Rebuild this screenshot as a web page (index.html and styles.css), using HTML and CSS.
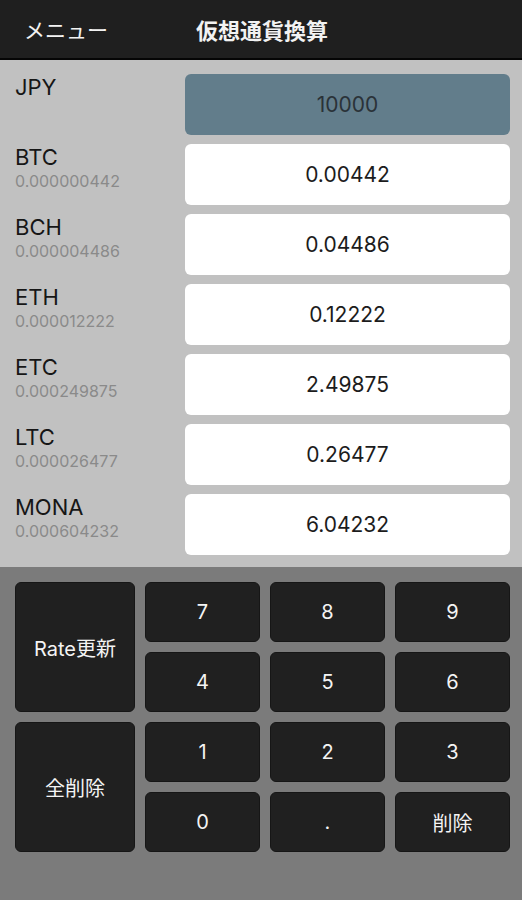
FILE: index.html
```html
<!DOCTYPE html>
<html lang="ja">
<head>
    <meta charset="UTF-8">
    <title>仮想通貨換算</title>
    <link rel="stylesheet" href="styles.css">
</head>
<body>
    <header class="topbar">
        <span class="menu">メニュー</span>
        <span class="title">仮想通貨換算</span>
    </header>

    <section class="rates">
        <div class="row">
            <div class="label"><div class="code">JPY</div></div>
            <div class="value active">10000</div>
        </div>
        <div class="row">
            <div class="label"><div class="code">BTC</div><div class="rate">0.000000442</div></div>
            <div class="value">0.00442</div>
        </div>
        <div class="row">
            <div class="label"><div class="code">BCH</div><div class="rate">0.000004486</div></div>
            <div class="value">0.04486</div>
        </div>
        <div class="row">
            <div class="label"><div class="code">ETH</div><div class="rate">0.000012222</div></div>
            <div class="value">0.12222</div>
        </div>
        <div class="row">
            <div class="label"><div class="code">ETC</div><div class="rate">0.000249875</div></div>
            <div class="value">2.49875</div>
        </div>
        <div class="row">
            <div class="label"><div class="code">LTC</div><div class="rate">0.000026477</div></div>
            <div class="value">0.26477</div>
        </div>
        <div class="row">
            <div class="label"><div class="code">MONA</div><div class="rate">0.000604232</div></div>
            <div class="value">6.04232</div>
        </div>
    </section>

    <section class="keypad">
        <button class="key tall">Rate更新</button>
        <button class="key">7</button>
        <button class="key">8</button>
        <button class="key">9</button>
        <button class="key">4</button>
        <button class="key">5</button>
        <button class="key">6</button>
        <button class="key tall">全削除</button>
        <button class="key">1</button>
        <button class="key">2</button>
        <button class="key">3</button>
        <button class="key">0</button>
        <button class="key">.</button>
        <button class="key">削除</button>
    </section>
</body>
</html>
```

FILE: styles.css
```css
html, body {
    margin: 0;
    height: 100%;
}
body {
    font-family: 'Inter', 'Noto Sans CJK JP', sans-serif;
    background: #7b7b7b;
    color: #1a1a1a;
}
.topbar {
    height: 58px;
    background: #1f1f1f;
    border-bottom: 2px solid #050505;
    display: flex;
    align-items: center;
    color: #f2f2f2;
}
.menu {
    font-size: 21px;
    margin-left: 24px;
    width: 172px;
}
.title {
    font-size: 22px;
    font-weight: bold;
}
.rates {
    background: #c1c1c1;
    padding: 14px 12px 12px 15px;
    display: flex;
    flex-direction: column;
    gap: 9px;
}
.row {
    display: flex;
    height: 61px;
}
.label {
    width: 170px;
    padding-top: 1px;
}
.code {
    font-size: 22px;
    line-height: 25px;
    color: #161616;
}
.rate {
    font-size: 16px;
    line-height: 22px;
    color: #8a8a8a;
}
.value {
    flex: 1;
    background: #fff;
    border-radius: 6px;
    display: flex;
    align-items: center;
    justify-content: center;
    font-size: 21px;
    color: #1c1c1c;
}
.value.active {
    background: #627d8b;
    color: #2a3238;
}
.keypad {
    display: grid;
    grid-template-columns: 120px repeat(3, 115px);
    grid-auto-rows: 60px;
    gap: 10px;
    padding: 15px 12px 0 15px;
}
.key {
    background: #202020;
    border: 1px solid #161616;
    border-radius: 6px;
    color: #f4f4f4;
    font-family: inherit;
    font-size: 20px;
    padding: 0;
}
.key.tall {
    grid-row: span 2;
}
```
